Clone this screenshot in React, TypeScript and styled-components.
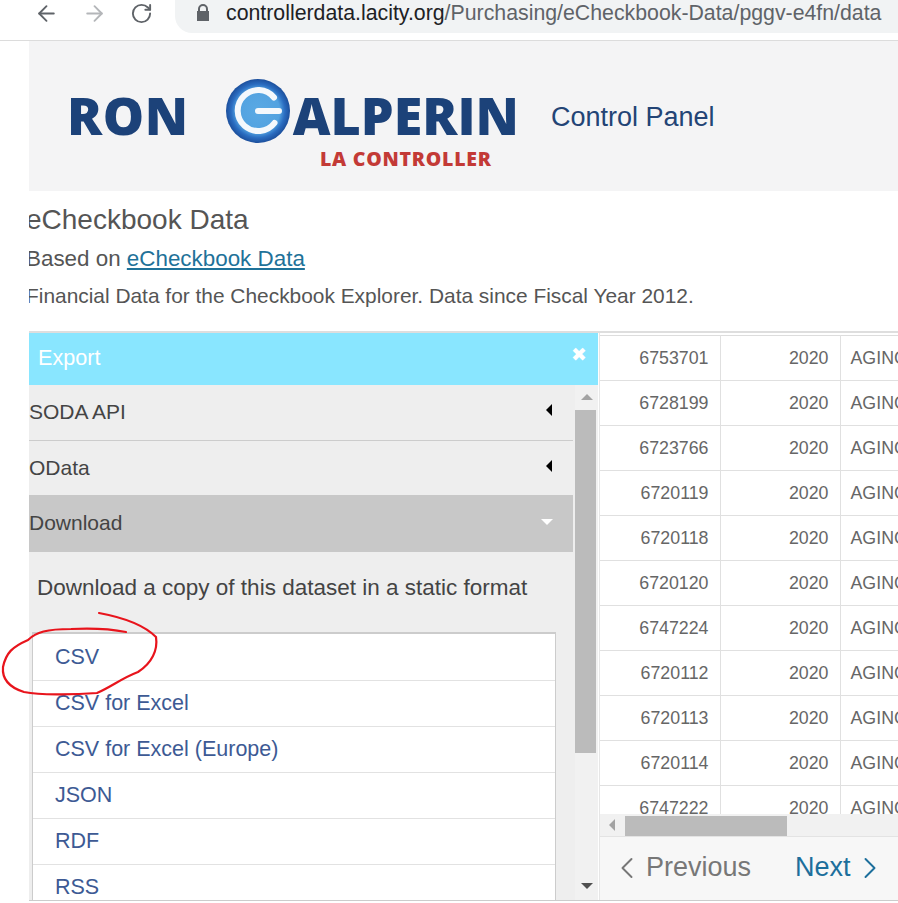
import React from "react";
import styled, { createGlobalStyle } from "styled-components";
import { ArrowLeft, ArrowRight, ChevronLeft, ChevronRight, RotateCw } from "lucide-react";

const GlobalStyle = createGlobalStyle`
    html, body {
        margin: 0;
        padding: 0;
        background: #fff;
    }
    body {
        font-family: "Liberation Sans", Arial, sans-serif;
    }
`;

const rows = ["6753701", "6728199", "6723766", "6720119", "6720118", "6720120", "6747224", "6720112", "6720113", "6720114", "6747222"];
const formats = ["CSV", "CSV for Excel", "CSV for Excel (Europe)", "JSON", "RDF", "RSS"];

const App = () => {
    return (
        <Screen>
            <GlobalStyle />
            <ChromeBar>
                <NavIcons>
                    <ArrowLeft size={25} color="#5f6368" strokeWidth={1.8} />
                    <ArrowRight size={25} color="#b4b6b9" strokeWidth={1.8} />
                    <RotateCw size={23} color="#5f6368" strokeWidth={2} />
                </NavIcons>
                <Omnibox>
                    <svg width="14" height="18" viewBox="0 0 14 18">
                        <path d="M2 7V5a5 5 0 0 1 10 0v2h1v10H1V7h1zm2 0h6V5a3 3 0 0 0-6 0v2z" fill="#5f6368" />
                    </svg>
                    <Url>
                        <UrlHost>controllerdata.lacity.org</UrlHost>/Purchasing/eCheckbook-Data/pggv-e4fn/data
                    </Url>
                </Omnibox>
            </ChromeBar>
            <Page>
                <Banner>
                    <Logo>
                        <LogoRow>
                            <LogoWord>RON</LogoWord>
                            <svg width="66" height="66" viewBox="0 0 66 66">
                                <defs>
                                    <radialGradient id="ball" cx="50%" cy="50%" r="50%">
                                        <stop offset="0%" stopColor="#5aa9e4" />
                                        <stop offset="68%" stopColor="#52a2e0" />
                                        <stop offset="84%" stopColor="#2a6cc0" />
                                        <stop offset="100%" stopColor="#1c4f9c" />
                                    </radialGradient>
                                </defs>
                                <circle cx="33" cy="33" r="32" fill="url(#ball)" />
                                <path
                                    d="M49 19.5A20.5 20.5 0 1 0 49.5 45M33 33h21"
                                    fill="none"
                                    stroke="#f4f8fc"
                                    strokeWidth="6"
                                    strokeLinecap="round"
                                />
                            </svg>
                            <LogoWord tight>ALPERIN</LogoWord>
                        </LogoRow>
                        <LogoTag>LA CONTROLLER</LogoTag>
                    </Logo>
                    <PanelTitle>Control Panel</PanelTitle>
                </Banner>
                <Intro>
                    <Title>eCheckbook Data</Title>
                    <Based>
                        Based on <DataLink href="#">eCheckbook Data</DataLink>
                    </Based>
                    <Summary>Financial Data for the Checkbook Explorer. Data since Fiscal Year 2012.</Summary>
                </Intro>
                <Main>
                    <ExportPanel>
                        <ExportHead>
                            Export
                            <CloseMark>✖</CloseMark>
                        </ExportHead>
                        <ExportBody>
                            <Accordion>
                                <Section divided>
                                    SODA API
                                    <ArrowMark />
                                </Section>
                                <Section>
                                    OData
                                    <ArrowMark />
                                </Section>
                                <Section open>
                                    Download
                                    <OpenMark />
                                </Section>
                                <Description>Download a copy of this dataset in a static format</Description>
                                <FormatList>
                                    {formats.map((format) => (
                                        <FormatRow key={format}>{format}</FormatRow>
                                    ))}
                                </FormatList>
                            </Accordion>
                            <VerticalBar>
                                <BarUp />
                                <BarThumb />
                                <BarDown />
                            </VerticalBar>
                        </ExportBody>
                    </ExportPanel>
                    <DataPanel>
                        <TableClip>
                            <Table>
                                <tbody>
                                    {rows.map((id) => (
                                        <tr key={id}>
                                            <NumCell>{id}</NumCell>
                                            <NumCell>2020</NumCell>
                                            <TextCell>AGING</TextCell>
                                        </tr>
                                    ))}
                                </tbody>
                            </Table>
                        </TableClip>
                        <HorizontalBar>
                            <BarLeft />
                            <BarThumbWide />
                        </HorizontalBar>
                        <Pager>
                            <PagerLink>
                                <PagerChevron as={ChevronLeft} size={36} strokeWidth={1.3} color="#777" />
                                Previous
                            </PagerLink>
                            <PagerLink active>
                                Next
                                <PagerChevron as={ChevronRight} size={36} strokeWidth={1.3} color="#1d6f9c" />
                            </PagerLink>
                        </Pager>
                    </DataPanel>
                </Main>
            </Page>
            <Scribble width="898" height="903" viewBox="0 0 898 903">
                <path
                    d="M99 613C126 618 146 627 156 637C158 650 152 663 138 672C122 678 111 687 97 693C71 695 40 695 24 692C8 687 2 678 3 667C6 653 12 647 28 640C36 632 47 629 71 629C91 628 111 629 126 632"
                    fill="none"
                    stroke="#e8141c"
                    strokeWidth="2.2"
                    strokeLinecap="round"
                />
            </Scribble>
        </Screen>
    );
};

const Screen = styled.div`
    position: relative;
    width: 898px;
    height: 903px;
    overflow: hidden;
    background: #fff;
`;

const ChromeBar = styled.div`
    display: flex;
    height: 40px;
    border-bottom: 1px solid #dcdcdc;
    box-sizing: content-box;
`;

const NavIcons = styled.div`
    display: flex;
    align-items: center;
    gap: 23px;
    width: 175px;
    height: 26px;
    padding-left: 34px;
    box-sizing: border-box;
`;

const Omnibox = styled.div`
    flex: 1;
    display: flex;
    align-items: center;
    gap: 16px;
    height: 33px;
    margin-right: -40px;
    padding: 0 0 7px 21px;
    box-sizing: border-box;
    background: #f1f3f4;
    border-radius: 0 0 0 17px;
`;

const Url = styled.span`
    font-size: 21.3px;
    color: #5f6368;
    white-space: nowrap;
`;

const UrlHost = styled.span`
    color: #202124;
`;

const Page = styled.div`
    margin-left: 29px;
    overflow: hidden;
`;

const Banner = styled.header`
    display: flex;
    align-items: center;
    height: 150px;
    padding-left: 38px;
    background: #f4f4f5;
`;

const Logo = styled.div`
    display: flex;
    flex-direction: column;
    width: 484px;
    flex: none;
    margin-top: 17px;
`;

const LogoRow = styled.div`
    display: flex;
    align-items: center;
    height: 66px;
`;

const LogoWord = styled.span<{ tight?: boolean }>`
    font-family: "Open Sans", sans-serif;
    font-weight: 800;
    font-size: 52px;
    line-height: 40px;
    letter-spacing: ${(props) => (props.tight ? "0" : "0.6px")};
    color: #1c4279;
    margin: ${(props) => (props.tight ? "0 0 0 2px" : "0 36px 0 0")};
    transform: translateY(4px);
`;

const LogoTag = styled.div`
    margin: 3px 0 0 253px;
    font-family: "Open Sans", sans-serif;
    font-weight: 800;
    font-size: 19.5px;
    line-height: 24px;
    letter-spacing: 0.75px;
    color: #c33a36;
    white-space: nowrap;
`;

const PanelTitle = styled.div`
    margin-top: 3px;
    font-size: 27px;
    color: #234475;
    white-space: nowrap;
`;

const Intro = styled.section`
    height: 140px;
    margin-left: -3px;
    color: #555;
`;

const Title = styled.h1`
    margin: 0;
    padding-top: 13px;
    font-size: 28px;
    line-height: 32px;
    font-weight: 400;
`;

const Based = styled.div`
    margin-top: 8px;
    font-size: 22.4px;
    line-height: 30px;
`;

const DataLink = styled.a`
    color: #1f7299;
`;

const Summary = styled.div`
    margin-top: 10px;
    font-size: 20.9px;
    line-height: 24px;
`;

const Main = styled.div`
    display: flex;
    height: 570px;
    border-top: 2px solid #dedede;
    border-bottom: 1px solid #ccc;
    box-sizing: border-box;
`;

const ExportPanel = styled.aside`
    display: flex;
    flex-direction: column;
    width: 569px;
    flex: none;
    background: #eee;
`;

const ExportHead = styled.div`
    display: flex;
    align-items: center;
    justify-content: space-between;
    height: 52px;
    flex: none;
    padding: 0 11px 2px 9px;
    box-sizing: border-box;
    background: #89e6ff;
    color: #fff;
    font-size: 21.6px;
`;

const CloseMark = styled.span`
    font-size: 19px;
    line-height: 20px;
    margin-bottom: 6px;
`;

const ExportBody = styled.div`
    flex: 1;
    display: flex;
    gap: 2px;
    min-height: 0;
`;

const Accordion = styled.div`
    width: 544px;
    overflow: hidden;
`;

const Section = styled.div<{ divided?: boolean; open?: boolean }>`
    display: flex;
    align-items: center;
    justify-content: space-between;
    height: ${(props) => (props.open ? "57px" : props.divided ? "56px" : "54px")};
    padding: 0 21px 1px 0;
    box-sizing: border-box;
    background: ${(props) => (props.open ? "#c8c8c8" : "transparent")};
    border-bottom: ${(props) => (props.divided ? "1px solid #ccc" : "none")};
    color: #444;
    font-size: 21px;
`;

const ArrowMark = styled.span`
    width: 0;
    height: 0;
    margin: 0 0 4px;
    border-top: 6px solid transparent;
    border-bottom: 6px solid transparent;
    border-right: 6px solid #000;
`;

const OpenMark = styled.span`
    width: 0;
    height: 0;
    margin: 0 -1px 3px 0;
    border-left: 6px solid transparent;
    border-right: 6px solid transparent;
    border-top: 6px solid #fff;
`;

const Description = styled.p`
    margin: 22px 0 0 8px;
    font-size: 22.5px;
    line-height: 28px;
    color: #444;
    white-space: nowrap;
`;

const FormatList = styled.ul`
    margin: 30px 0 0 3px;
    padding: 1px 0 0;
    width: 524px;
    list-style: none;
    background: #fff;
    border: 1px solid #ccc;
    border-top-width: 2px;
    border-bottom: none;
    box-sizing: border-box;
`;

const FormatRow = styled.li`
    display: flex;
    align-items: center;
    height: 46px;
    padding-left: 22px;
    border-bottom: 1px solid #e2e2e2;
    box-sizing: border-box;
    color: #3d5a94;
    font-size: 21.5px;
`;

const VerticalBar = styled.div`
    display: flex;
    flex-direction: column;
    align-items: center;
    width: 23px;
    background: #f1f1f1;
`;

const BarThumb = styled.div`
    align-self: flex-start;
    width: 21px;
    height: 343px;
    margin-top: 10px;
    background: #bbb;
`;

const BarUp = styled.span`
    width: 0;
    height: 0;
    margin-top: 9px;
    border-left: 6px solid transparent;
    border-right: 6px solid transparent;
    border-bottom: 6px solid #a3a3a3;
`;

const BarDown = styled.span`
    width: 0;
    height: 0;
    margin-top: auto;
    margin-bottom: 11px;
    border-left: 6px solid transparent;
    border-right: 6px solid transparent;
    border-top: 6px solid #505050;
`;

const DataPanel = styled.section`
    flex: 1;
    display: flex;
    flex-direction: column;
    min-width: 0;
    margin-left: 1px;
    border-left: 1px solid #e6e6e6;
    background: #fff;
`;

const TableClip = styled.div`
    flex: 1;
    min-height: 0;
    overflow: hidden;
    padding-top: 2px;
`;

const Table = styled.table`
    width: 320px;
    border-collapse: collapse;
    table-layout: fixed;
    border-top: 1px solid #ddd;
`;

const NumCell = styled.td`
    width: 120px;
    height: 45px;
    padding: 0 11px 0 0;
    box-sizing: border-box;
    border-right: 1px solid #e0e0e0;
    border-bottom: 1px solid #e0e0e0;
    color: #666;
    font-size: 17.8px;
    text-align: right;
`;

const TextCell = styled.td`
    padding-left: 10px;
    border-bottom: 1px solid #e0e0e0;
    color: #666;
    font-size: 17.8px;
    white-space: nowrap;
    overflow: hidden;
`;

const HorizontalBar = styled.div`
    display: flex;
    align-items: center;
    flex: none;
    height: 22px;
    background: #f1f1f1;
    border-bottom: 1px solid #e3e3e3;
    box-sizing: content-box;
`;

const BarLeft = styled.span`
    width: 0;
    height: 0;
    margin-left: 9px;
    border-top: 6px solid transparent;
    border-bottom: 6px solid transparent;
    border-right: 6px solid #a3a3a3;
`;

const BarThumbWide = styled.div`
    align-self: flex-end;
    width: 162px;
    height: 20px;
    margin-left: 10px;
    background: #bbb;
`;

const Pager = styled.nav`
    display: flex;
    align-items: center;
    flex: none;
    gap: 44px;
    height: 63px;
    padding: 0 0 2px 12px;
    box-sizing: border-box;
    background: #f7f7f7;
`;

const PagerLink = styled.span<{ active?: boolean }>`
    display: flex;
    align-items: center;
    gap: 4px;
    font-size: 27px;
    color: ${(props) => (props.active ? "#1d6f9c" : "#777")};
`;

const PagerChevron = styled.svg`
    margin: 0 -3px;
`;

const Scribble = styled.svg`
    position: absolute;
    left: 0;
    top: 0;
    pointer-events: none;
`;

export default App;
